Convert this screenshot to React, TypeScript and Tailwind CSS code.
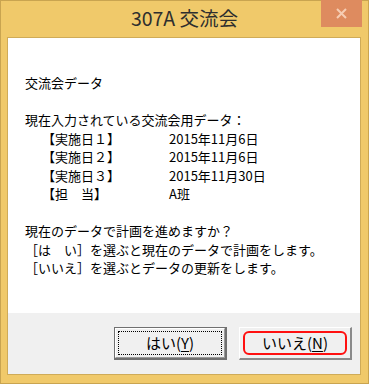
export default function App() {
  const font = { fontFamily: '"Noto Sans CJK JP", "Noto Sans", sans-serif' };

  const rows = [
    { label: '【実施日１】', value: '2015年11月6日' },
    { label: '【実施日２】', value: '2015年11月6日' },
    { label: '【実施日３】', value: '2015年11月30日' },
    { label: '【担　当】', value: 'A班' },
  ];

  return (
    <div
      className="w-[369px] h-[384px] bg-[#f0c96a] border border-[#c9a450] flex flex-col text-black"
      style={font}
    >
      {/* title bar */}
      <div className="relative h-[36px] flex items-center justify-center">
        <span className="text-[19.5px] text-[#2e2e2e] leading-none -mt-[2px]">307A 交流会</span>
        <div className="absolute right-[6px] -top-px w-[41px] h-[27px] bg-[#de8b5f] flex items-center justify-center">
          <svg width="11" height="11" viewBox="0 0 11 11">
            <path d="M1 1L10 10M10 1L1 10" stroke="#f6cdb3" strokeWidth="2" />
          </svg>
        </div>
      </div>

      {/* client area */}
      <div className="ml-[6px] mr-[6px] w-[354px] h-[338px] border border-[#cfab58] flex flex-col">
        <div className="flex-1 bg-white pl-[17px] pt-[36px] text-[13px] leading-[18.5px]">
          <div>交流会データ</div>
          <div className="h-[18.5px]" />
          <div>現在入力されている交流会用データ：</div>
          {rows.map((r) => (
            <div key={r.label} className="flex">
              <span className="w-[144px] pl-[17px]">{r.label}</span>
              <span>{r.value}</span>
            </div>
          ))}
          <div className="h-[18.5px]" />
          <div>現在のデータで計画を進めますか？</div>
          <div>［は　い］を選ぶと現在のデータで計画をします。</div>
          <div>［いいえ］を選ぶとデータの更新をします。</div>
        </div>

        <div className="h-[61px] bg-[#f0f0f0] flex items-start justify-end gap-[12px] pt-[14px] pr-[8px]">
          {/* default (focused) button */}
          <div className="w-[113px] h-[33px] bg-[#707070] p-px pr-[2px] pb-[2px]">
            <div className="w-full h-full border-t border-l border-white border-r border-b border-r-[#9a9a9a] border-b-[#9a9a9a] bg-[#f0f0f0] p-[2px]">
              <div className="w-full h-full border border-dotted border-black flex items-center justify-center text-[15px]">
                はい(<span className="underline underline-offset-2">Y</span>)
              </div>
            </div>
          </div>
          {/* second button */}
          <div className="w-[113px] h-[33px] border-t border-l border-white border-r-2 border-b-2 border-r-[#8a8a8a] border-b-[#8a8a8a] bg-[#f0f0f0] p-[3px]">
            <div className="w-full h-full rounded-[6px] border-2 border-[#ff1010] flex items-center justify-center text-[15px]">
              いいえ(<span className="underline underline-offset-2">N</span>)
            </div>
          </div>
        </div>
      </div>
    </div>
  );
}
